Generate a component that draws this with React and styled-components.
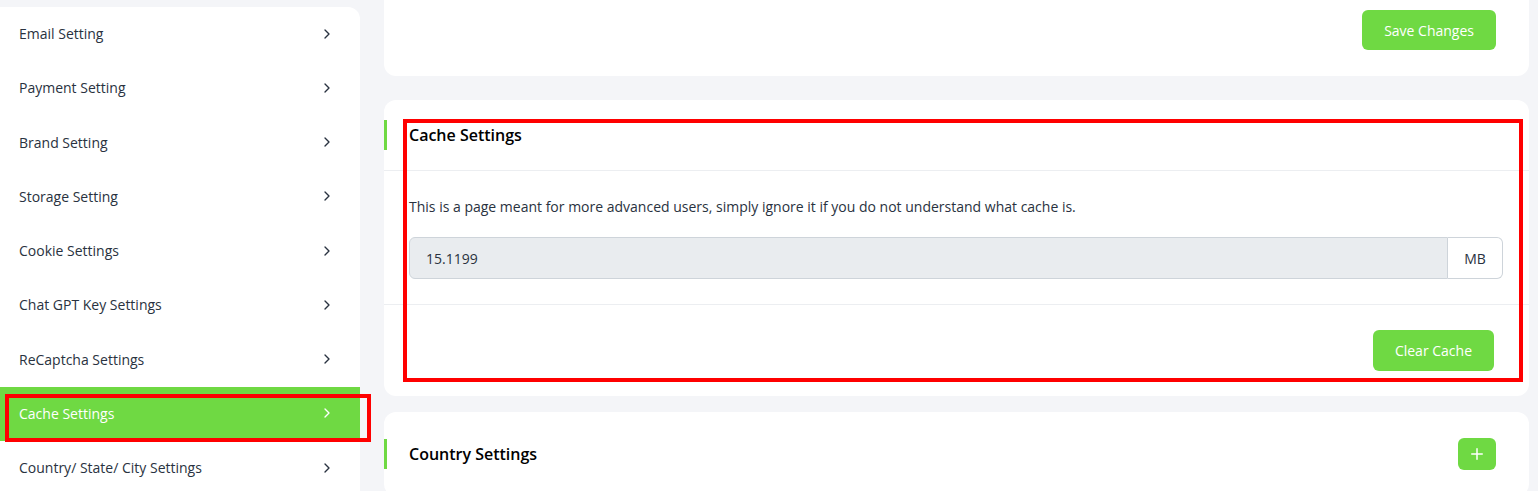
import React from 'react'
import styled, { createGlobalStyle } from 'styled-components'
import { ChevronRight, Plus } from 'lucide-react'

const Global = createGlobalStyle`
  body {
    margin: 0;
    background: #f4f5f8;
    font-family: "Open Sans", "Liberation Sans", sans-serif;
    color: #293240;
    overflow: hidden;
  }
`

const Page = styled.div`
  position: relative;
  display: flex;
  gap: 24px;
  height: 491px;
  overflow: hidden;
`

const Sidebar = styled.nav`
  width: 360px;
  margin-top: 7px;
  background: #fff;
  border-radius: 0 12px 12px 0;
  align-self: flex-start;
  padding-bottom: 20px;
`

const Item = styled.div`
  height: 54.25px;
  display: flex;
  align-items: center;
  justify-content: space-between;
  padding: 0 25px 1px 19px;
  box-sizing: border-box;
  font-size: 14px;
  background: ${p => (p.active ? '#6fd943' : 'transparent')};
  color: ${p => (p.active ? '#fff' : '#293240')};
  svg { color: ${p => (p.active ? '#fff' : '#293240')}; }
`

const Main = styled.main`
  width: 1145px;
  display: flex;
  flex-direction: column;
`

const Card = styled.section`
  background: #fff;
  border-radius: ${p => (p.cut ? '0 0 12px 12px' : '12px')};
  margin-bottom: ${p => p.gap || 0}px;
`

const TopActions = styled.div`
  height: 76px;
  display: flex;
  justify-content: flex-end;
  align-items: flex-start;
  padding: 10px 33px 0 0;
  box-sizing: border-box;
`

const Button = styled.button`
  background: #6fd943;
  color: #fff;
  border: none;
  border-radius: 6px;
  font-family: inherit;
  font-size: 14px;
  height: ${p => p.h ?? 40}px;
  min-width: ${p => p.w ?? 0}px;
  padding: 0 ${p => p.px ?? 22}px;
  display: flex;
  align-items: center;
  justify-content: center;
  svg { flex-shrink: 0; }
`

const Header = styled.div`
  position: relative;
  height: ${p => p.h}px;
  display: flex;
  align-items: center;
  justify-content: space-between;
  padding: 0 33px 0 25px;
  border-bottom: ${p => (p.line ? '1px solid #eceef1' : 'none')};
  box-sizing: border-box;
  &::before {
    content: '';
    position: absolute;
    left: 0;
    top: 50%;
    margin-top: -15px;
    width: 3px;
    height: 30px;
    background: #6fd943;
  }
`

const Title = styled.h5`
  margin: 0;
  font-size: 16px;
  font-weight: 600;
  color: #000;
`

const Body = styled.div`
  padding: 25px 26px 25px 25px;
  border-bottom: 1px solid #eceef1;
`

const Text = styled.p`
  margin: 0 0 20px;
  font-size: 14px;
  line-height: 21px;
`

const InputGroup = styled.div`
  display: flex;
  height: 42px;
`

const Input = styled.div`
  flex: 1;
  background: #e9ecef;
  border: 1px solid #ced4da;
  border-radius: 6px 0 0 6px;
  display: flex;
  align-items: center;
  padding-left: 16px;
  font-size: 14px;
`

const Addon = styled.div`
  width: 54px;
  border: 1px solid #ced4da;
  border-left: none;
  border-radius: 0 6px 6px 0;
  display: flex;
  align-items: center;
  justify-content: center;
  font-size: 14px;
`

const Footer = styled.div`
  display: flex;
  justify-content: flex-end;
  padding: 25px 35px 25px 0;
`

const Mark = styled.div`
  position: absolute;
  border: 4px solid #ff0000;
  box-sizing: border-box;
  pointer-events: none;
`

const items = [
  'Email Setting',
  'Payment Setting',
  'Brand Setting',
  'Storage Setting',
  'Cookie Settings',
  'Chat GPT Key Settings',
  'ReCaptcha Settings',
  'Cache Settings',
  'Country/ State/ City Settings',
]

export default function App() {
  return (
    <>
      <Global />
      <Page>
        <Sidebar>
          {items.map((name, i) => (
            <Item key={i} active={name === 'Cache Settings'}>
              <span>{name}</span>
              <ChevronRight size={16} strokeWidth={2} />
            </Item>
          ))}
        </Sidebar>

        <Main>
          <Card cut gap={24}>
            <TopActions>
              <Button>Save Changes</Button>
            </TopActions>
          </Card>

          <Card gap={16}>
            <Header h={71} line>
              <Title>Cache Settings</Title>
            </Header>
            <Body>
              <Text>This is a page meant for more advanced users, simply ignore it if you do not understand what cache is.</Text>
              <InputGroup>
                <Input>15.1199</Input>
                <Addon>MB</Addon>
              </InputGroup>
            </Body>
            <Footer>
              <Button h={41}>Clear Cache</Button>
            </Footer>
          </Card>

          <Card>
            <Header h={84}>
              <Title>Country Settings</Title>
              <Button h={32} px={0} w={38}>
                <Plus size={18} strokeWidth={2} />
              </Button>
            </Header>
          </Card>
        </Main>

        <Mark style={{ left: 403, top: 119, width: 1120, height: 263 }} />
        <Mark style={{ left: 5, top: 394, width: 366, height: 48 }} />
      </Page>
    </>
  )
}
